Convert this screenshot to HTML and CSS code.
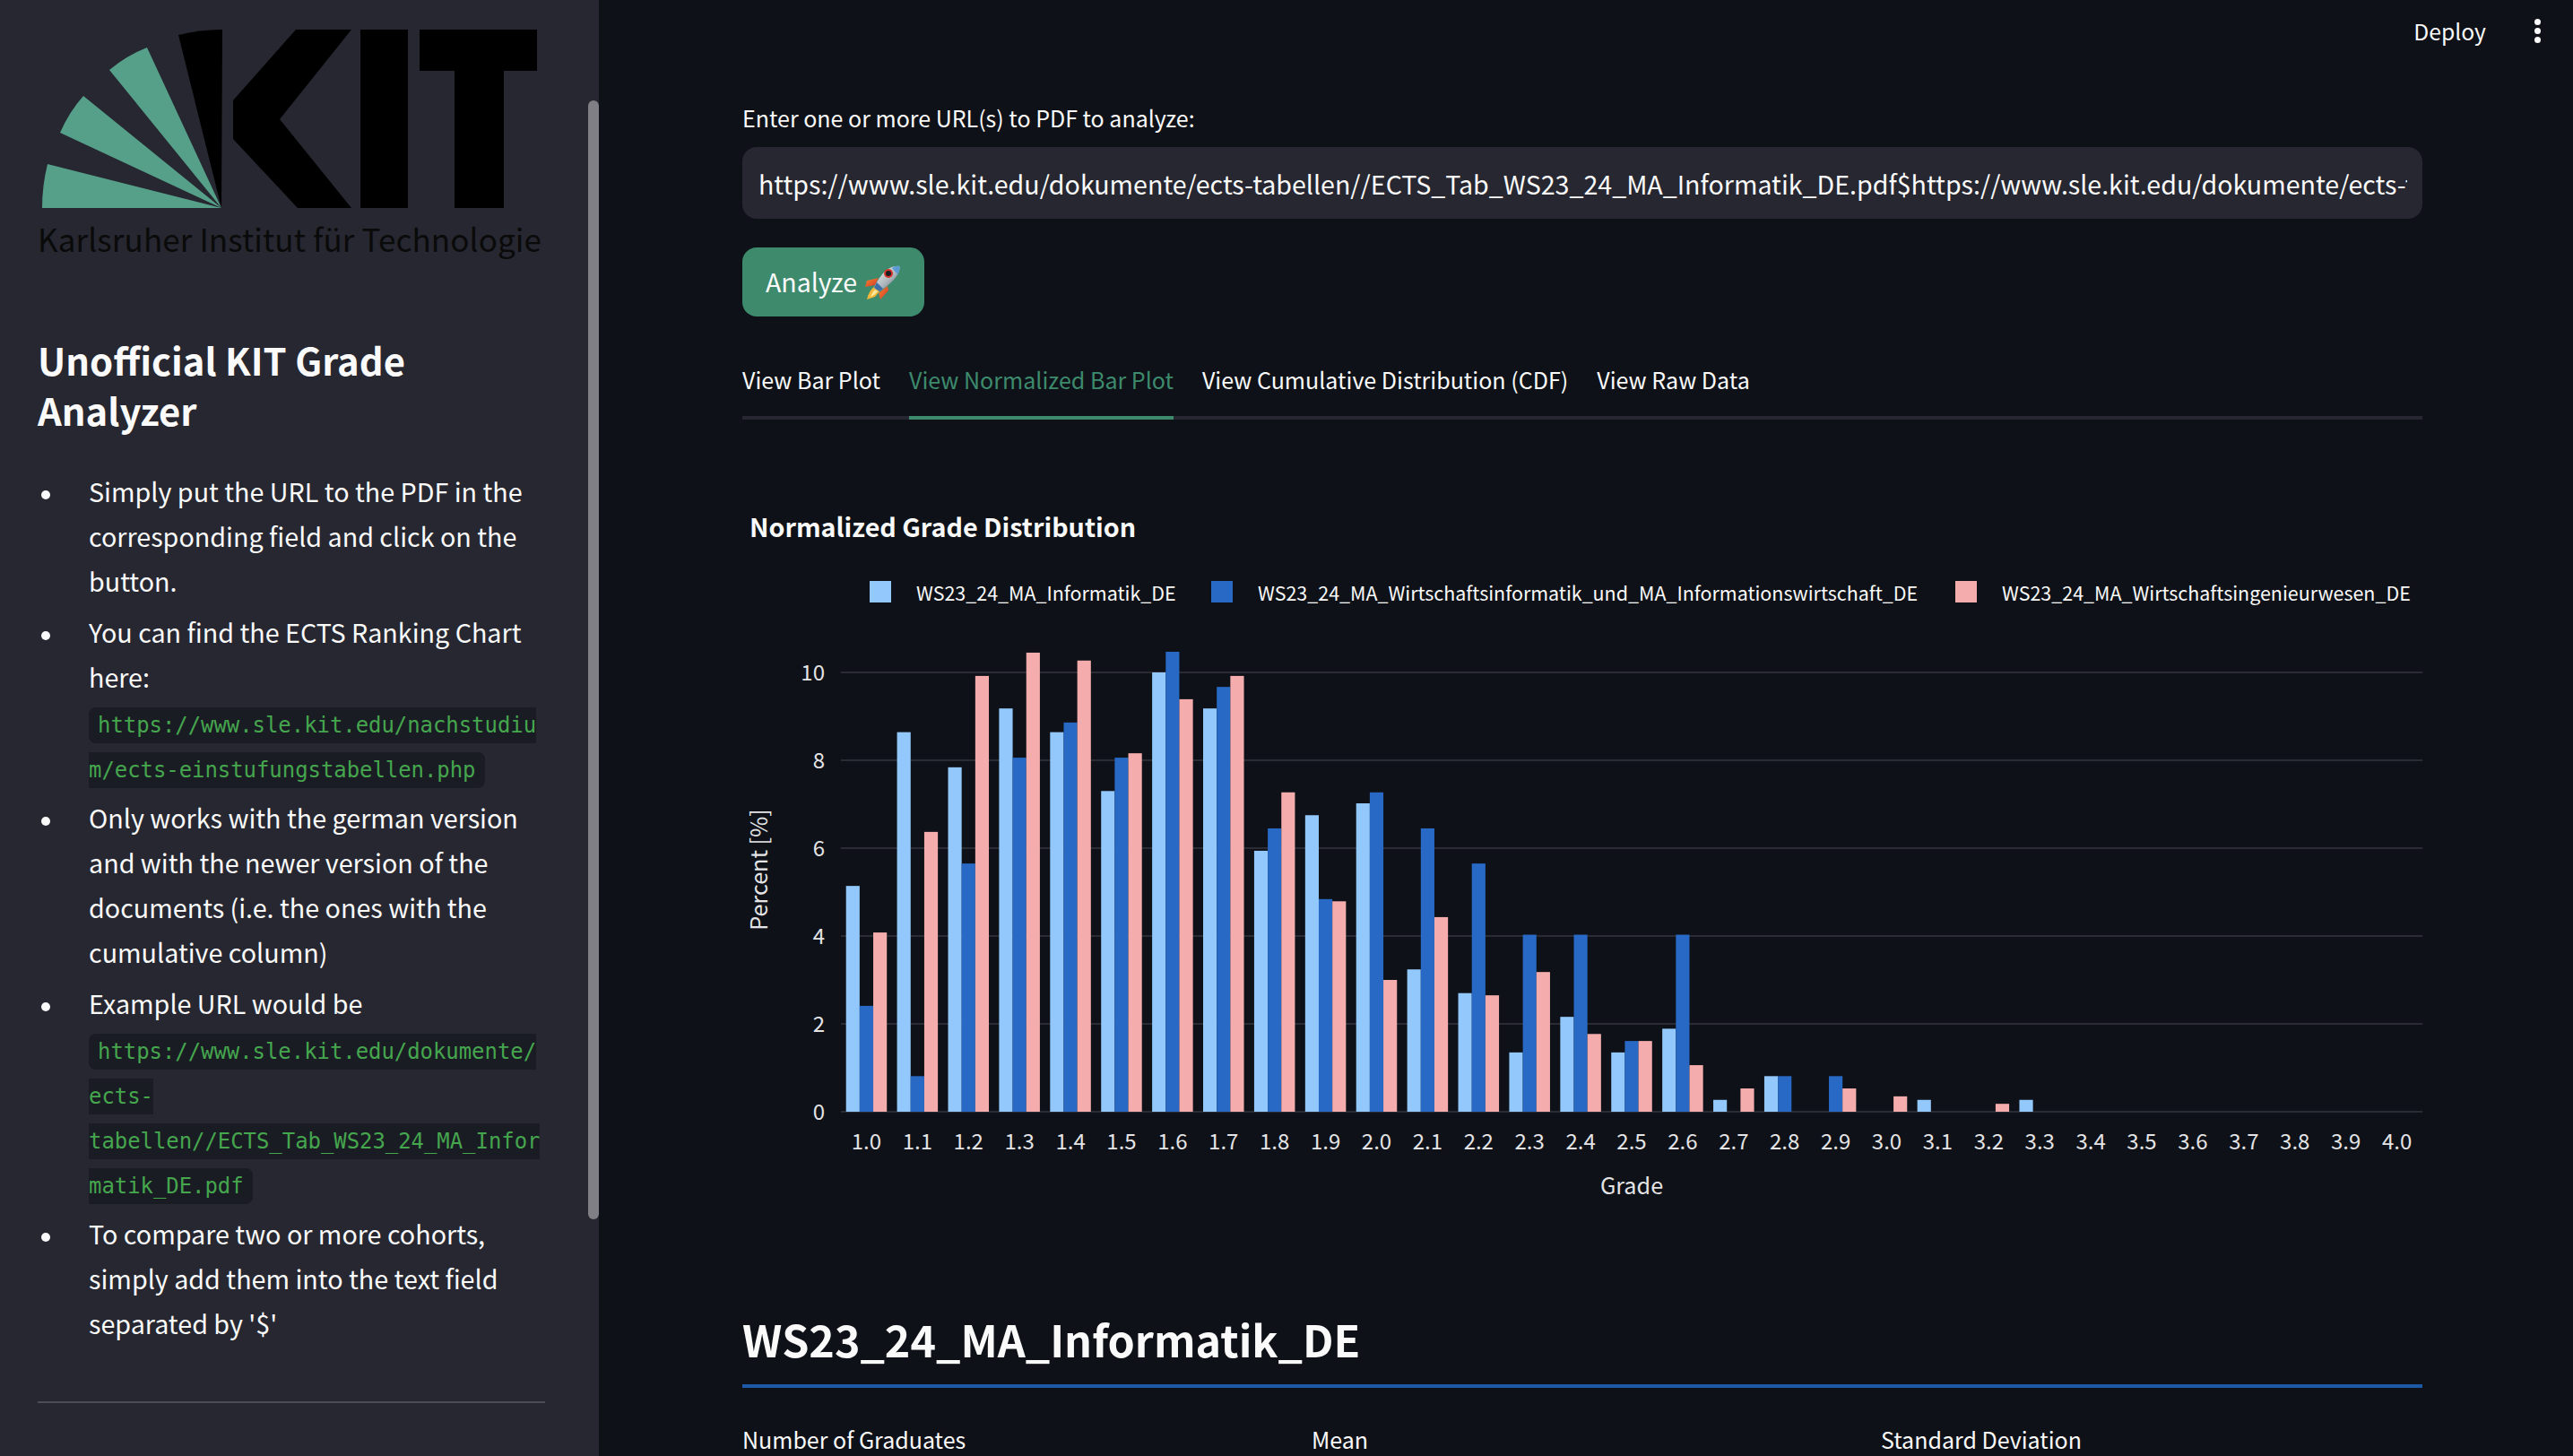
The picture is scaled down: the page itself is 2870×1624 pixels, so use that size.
FILE: index.html

```html
<!DOCTYPE html>
<html lang="en">
<head>
  <meta charset="UTF-8" />
  <meta name="viewport" content="width=device-width, initial-scale=1.0" />
  <title>Unofficial KIT Grade Analyzer</title>
  <link rel="stylesheet" href="styles.css">
</head>
<body>
  <aside class="sidebar">
    <svg class="logo" viewBox="0 0 656 370" width="656" height="370">
      <g fill="#56a089">
        <path d="M247 232 L47 232 Q47 207 53 183 Z" />
        <path d="M247 232 L67 148 Q77 125 93 107 Z" />
        <path d="M247 232 L122 78 Q141 62 164 53 Z" />
      </g>
      <g fill="#000">
        <path d="M247 232 L199 39 Q223 33 248 33 Z" />
        <path d="M330 33 H392 L312 133 L392 232 H332 L260 155 V112 Z" />
        <path d="M402 33 H455 V232 H402 Z" />
        <path d="M468 33 H599 V79 H562 V232 H507 V79 H468 Z" />
      </g>
      <text class="logo-text" x="42" y="281" textLength="562">Karlsruher Institut für Technologie</text>
    </svg>

    <h2 class="side-title">Unofficial KIT Grade Analyzer</h2>

    <ul class="side-list">
      <li><div>Simply put the URL to the PDF in the corresponding field and click on the button.</div></li>
      <li><div>You can find the ECTS Ranking Chart here: <code>https://www.sle.kit.edu/nachstudium/ects-einstufungstabellen.php</code></div></li>
      <li><div>Only works with the german version and with the newer version of the documents (i.e. the ones with the cumulative column)</div></li>
      <li><div>Example URL would be <code>https://www.sle.kit.edu/dokumente/ects-tabellen//ECTS_Tab_WS23_24_MA_Informatik_DE.pdf</code></div></li>
      <li><div>To compare two or more cohorts, simply add them into the text field separated by '$'</div></li>
    </ul>

    <hr class="side-rule" />
    <div class="scrollbar"></div>
  </aside>

  <main class="content">
    <header class="topbar">
      <span class="deploy">Deploy</span>
      <span class="menu-dots"><i></i><i></i><i></i></span>
    </header>

    <label class="field-label" for="urls">Enter one or more URL(s) to PDF to analyze:</label>
    <input class="url-input" id="urls" type="text" value="https://www.sle.kit.edu/dokumente/ects-tabellen//ECTS_Tab_WS23_24_MA_Informatik_DE.pdf$https://www.sle.kit.edu/dokumente/ects-tabellen//ECTS_Tab_WS23_24_MA_Wirtschaftsinformatik_und_MA_Informationswirtschaft_DE.pdf" />

    <button class="analyze">
      Analyze
      <svg class="rocket" viewBox="10 9 39 38" width="39" height="38">
        <defs>
          <linearGradient id="hull" x1="0" y1="0" x2="1" y2="1">
            <stop offset="0" stop-color="#f2f4f5" />
            <stop offset="0.55" stop-color="#aeb6bd" />
            <stop offset="1" stop-color="#4d5a68" />
          </linearGradient>
          <linearGradient id="fin" x1="0" y1="0" x2="1" y2="1">
            <stop offset="0" stop-color="#f2872c" />
            <stop offset="1" stop-color="#d8352a" />
          </linearGradient>
        </defs>
        <path d="M25 23 L12 26 L10 33 L21 31 Z" fill="url(#fin)" />
        <path d="M35 32 L36 37 L27 47 L25 40 Z" fill="url(#fin)" />
        <path d="M21 32 L27 37 L21 44 L12 47 C13 41 16 36 21 32 Z" fill="#f4b93a" />
        <path d="M21 36 L24 38 L20 42 L16 44 C17 41 19 38 21 36 Z" fill="#fbe79a" />
        <path d="M48.5 10 C42 9 35 12 29 19 C25 24 22 29 20 34 L26 38 C31 35 36 31 41 26 C46 21 49 15 48.5 10 Z" fill="url(#hull)" />
        <path d="M48.5 10 C45 9.5 42 10.5 40 12 L46 19 C48 16 49 13 48.5 10 Z" fill="#5b9bd5" />
        <path d="M20 34 L26 38 L30 35 L23 28 Z" fill="#3f6fa6" />
        <circle cx="36" cy="18" r="5" fill="#d5352a" />
        <circle cx="36" cy="18" r="3" fill="#1b1b22" />
      </svg>
    </button>

    <nav class="tabs">
      <span class="tab">View Bar Plot</span>
      <span class="tab active">View Normalized Bar Plot</span>
      <span class="tab">View Cumulative Distribution (CDF)</span>
      <span class="tab">View Raw Data</span>
    </nav>

    <svg class="chart" id="chart" viewBox="828 560 1874 800" width="1874" height="800"></svg>

    <h2 class="cohort">WS23_24_MA_Informatik_DE</h2>

    <div class="metrics">
      <span>Number of Graduates</span>
      <span>Mean</span>
      <span>Standard Deviation</span>
    </div>
  </main>

  <script src="chart.js"></script>
</body>
</html>
```

FILE: styles.css

```css
* {
  box-sizing: border-box;
}
html, body {
  height: 100%;
}
body {
  margin: 0;
  display: flex;
  height: 1624px;
  overflow: hidden;
  background: #0e1117;
  color: #fafafa;
  font-family: "Noto Sans CJK SC", "Noto Sans", sans-serif;
}

/* sidebar */
.sidebar {
  position: relative;
  flex: 0 0 668px;
  background: #262730;
  padding-left: 42px;
  padding-right: 60px;
  overflow: hidden;
}
.logo {
  display: block;
  margin-left: -42px;
}
.logo-text {
  font-size: 35px;
  fill: #0a0a0a;
}
.side-title {
  margin: 3px 0 0;
  font-size: 41.8px;
  font-weight: 600;
  line-height: 56px;
}
.side-list {
  list-style: none;
  margin: 38px 0 0;
  padding: 0;
  font-size: 28.7px;
  line-height: 50px;
}
.side-list li {
  display: flex;
  margin-bottom: 7px;
}
.side-list li::before {
  content: "";
  flex: 0 0 10px;
  height: 10px;
  margin: 24px 43px 0 4px;
  border-radius: 50%;
  background: #fafafa;
}
.side-list li div {
  min-width: 0;
  flex: 1;
}
.side-list code {
  padding: 6px 10px;
  border-radius: 8px;
  background: #1a1c24;
  color: #45a64e;
  font-family: "DejaVu Sans Mono", monospace;
  font-size: 23.9px;
  line-height: 1;
  overflow-wrap: anywhere;
}
.side-rule {
  margin: 62px 0 0;
  border: 0;
  height: 2px;
  background: #4b4c56;
}
.scrollbar {
  position: absolute;
  top: 112px;
  right: 0;
  width: 12px;
  height: 1248px;
  border-radius: 6px;
  background: #7f7f85;
}

/* main column */
.content {
  flex: 1;
  min-width: 0;
  padding: 0 168px 0 160px;
}
.topbar {
  display: flex;
  justify-content: flex-end;
  align-items: center;
  gap: 54px;
  height: 68px;
  margin-right: -132px;
  font-size: 24.7px;
}
.menu-dots {
  display: flex;
  flex-direction: column;
  gap: 3px;
}
.menu-dots i {
  width: 7px;
  height: 7px;
  border-radius: 50%;
  background: #fafafa;
}
.field-label {
  display: block;
  margin-top: 43px;
  font-size: 25px;
  line-height: 40px;
}
.url-input {
  display: block;
  width: 100%;
  height: 80px;
  margin-top: 13px;
  padding: 0 17px 0 18px;
  border: 0;
  border-radius: 16px;
  background: #262730;
  color: #fafafa;
  font-family: inherit;
  font-size: 28.6px;
  outline: none;
}
.analyze {
  display: flex;
  align-items: center;
  gap: 9px;
  width: 203px;
  height: 77px;
  margin-top: 32px;
  padding: 0 0 3px 26px;
  border: 0;
  border-radius: 16px;
  background: #3d8a6d;
  color: #fafafa;
  font-family: inherit;
  font-size: 28.5px;
}
.rocket {
  flex: none;
  margin-top: 3px;
}
.tabs {
  display: flex;
  gap: 32px;
  height: 115px;
  padding-top: 50px;
  border-bottom: 4px solid #262730;
  font-size: 25.05px;
  line-height: 40px;
}
.tab {
  height: 65px;
}
.tab.active {
  color: #3d8a6d;
  border-bottom: 4px solid #3d8a6d;
}

/* chart */
.chart {
  display: block;
  margin-top: 92px;
}
.chart text {
  fill: #fafafa;
  font-size: 21.45px;
}
.chart .axis-label {
  fill: #e4e4e6;
  font-size: 24px;
}
.chart .chart-title {
  font-size: 28.7px;
  font-weight: 700;
}
.chart .axis-name {
  font-size: 25.2px;
  fill: #e4e4e6;
}

/* cohort section */
.cohort {
  margin: 110px 0 0;
  height: 78px;
  border-bottom: 4px solid #1c5aa8;
  font-size: 48.4px;
  font-weight: 600;
  line-height: 46px;
}
.metrics {
  display: grid;
  grid-template-columns: repeat(3, 635px);
  margin-top: 37px;
  font-size: 25px;
  line-height: 40px;
}
```

FILE: chart.js

```js
// Percent per grade: [Informatik, Wirtschaftsinformatik, Wirtschaftsingenieurwesen]
const grades = [
  [5.14, 2.41, 4.08], [8.64, 0.81, 6.37], [7.84, 5.65, 9.92], [9.18, 8.06, 10.45],
  [8.64, 8.86, 10.27], [7.3, 8.06, 8.16], [10, 10.47, 9.39], [9.18, 9.67, 9.92],
  [5.94, 6.45, 7.27], [6.75, 4.84, 4.79], [7.02, 7.27, 3.0], [3.24, 6.45, 4.43],
  [2.7, 5.65, 2.65], [1.35, 4.03, 3.18], [2.16, 4.03, 1.77], [1.35, 1.61, 1.61],
  [1.89, 4.03, 1.06], [0.27, 0, 0.53], [0.81, 0.81, 0], [0, 0.81, 0.53],
  [0, 0, 0.35], [0.27, 0, 0], [0, 0, 0.18], [0.27, 0, 0]
];
const colors = ["#92c8fb", "#2769c4", "#f4adac"];
const legend = [
  { name: "WS23_24_MA_Informatik_DE", box: 970, text: 1022 },
  { name: "WS23_24_MA_Wirtschaftsinformatik_und_MA_Informationswirtschaft_DE", box: 1351, text: 1403 },
  { name: "WS23_24_MA_Wirtschaftsingenieurwesen_DE", box: 2181, text: 2233 }
];

const left = 938, right = 2702, zero = 1240, perUnit = 49;
const band = (right - left) / 31;
const barW = band * 0.8 / 3;

let out = `<text class="chart-title" x="836" y="599">Normalized Grade Distribution</text>`;

legend.forEach((l, i) => {
  out += `<rect x="${l.box}" y="648" width="24" height="24" fill="${colors[i]}" />`;
  out += `<text x="${l.text}" y="670">${l.name}</text>`;
});

for (let v = 0; v <= 10; v += 2) {
  const y = zero - v * perUnit;
  out += `<rect x="${left}" y="${y - 1}" width="${right - left}" height="2" fill="#2a2b35" />`;
  out += `<text class="axis-label" x="920" y="${y + 9}" text-anchor="end">${v}</text>`;
}

for (let i = 0; i < 31; i++) {
  const center = left + band * (i + 0.5);
  const vals = grades[i] || [0, 0, 0];
  vals.forEach((v, s) => {
    if (v > 0) {
      const h = v * perUnit;
      const x = center - barW * 1.5 + barW * s;
      out += `<rect x="${x.toFixed(2)}" y="${(zero - h).toFixed(2)}" width="${barW.toFixed(2)}" height="${h.toFixed(2)}" fill="${colors[s]}" />`;
    }
  });
  out += `<text class="axis-label" x="${center.toFixed(2)}" y="1282" text-anchor="middle">${(1 + i / 10).toFixed(1)}</text>`;
}

out += `<text class="axis-name" x="1820" y="1332" text-anchor="middle">Grade</text>`;
out += `<text class="axis-name" transform="translate(856 970) rotate(-90)" text-anchor="middle">Percent [%]</text>`;

document.getElementById("chart").innerHTML = out;
```
